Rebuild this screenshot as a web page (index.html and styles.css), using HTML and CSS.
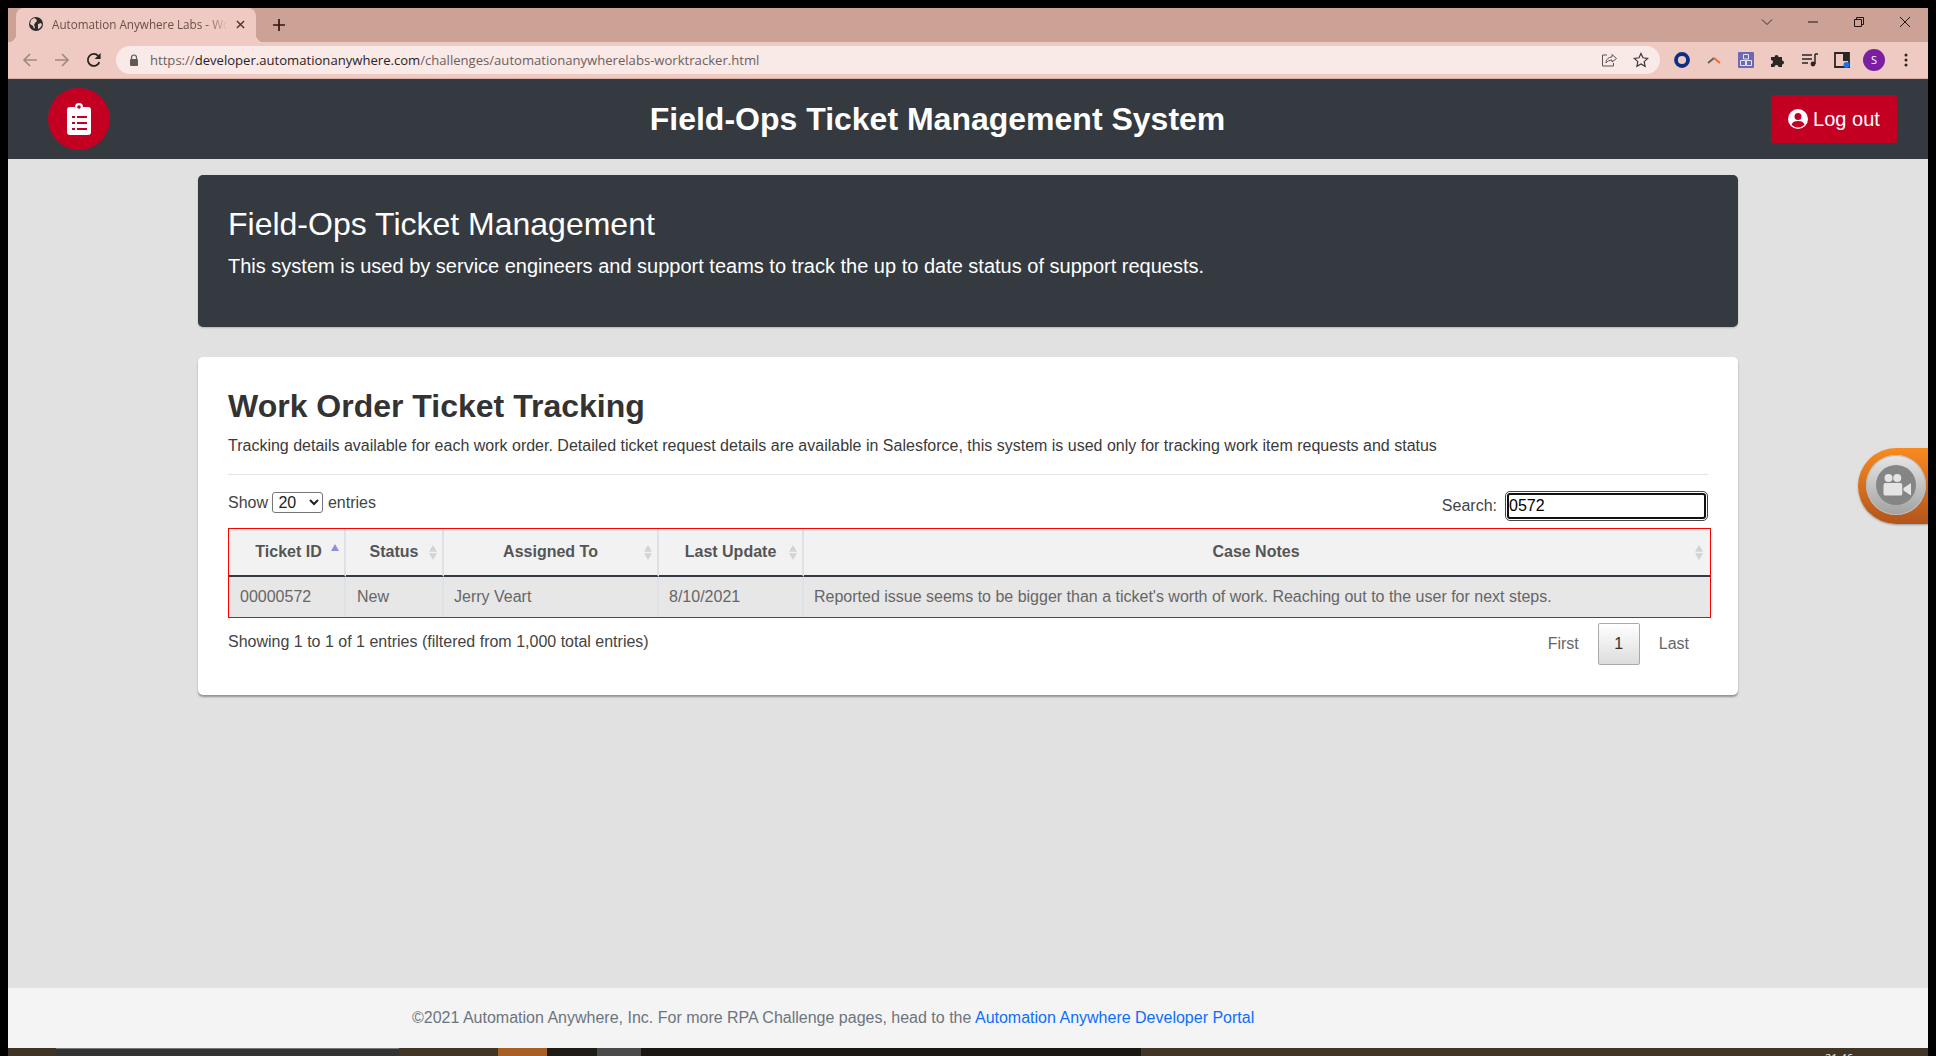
FILE: index.html
```html
<!DOCTYPE html>
<html lang="en">
<head>
<meta charset="utf-8">
<title>Automation Anywhere Labs - Work Tracker</title>
<link rel="stylesheet" href="styles.css">
</head>
<body>
<div class="window">
  <div class="tabstrip">
    <div class="tab">
      <svg class="favicon" viewBox="0 0 16 16"><circle cx="8" cy="8" r="7" fill="#2b2b2b"/><path d="M3 4l3-2 2 1 1 2-2 2-1 2 1 2-1 2-1-3-3-2zM10 8l3-1 1 2-2 3-2 1z" fill="#efcac2"/></svg>
      <span class="tab-title">Automation Anywhere Labs - Wo</span>
      <svg class="tab-close" viewBox="0 0 10 10"><path d="M1 1l8 8M9 1l-8 8" stroke="#4a3532" stroke-width="1.6"/></svg>
    </div>
    <svg class="newtab" viewBox="0 0 12 12"><path d="M6 0v12M0 6h12" stroke="#3d1210" stroke-width="1.7"/></svg>
    <div class="winctrls">
      <svg viewBox="0 0 12 12"><path d="M1 3.5l5 5 5-5" fill="none" stroke="#3c2c28"/></svg>
      <svg viewBox="0 0 12 12"><path d="M1 6h10" stroke="#201512" stroke-width="1"/></svg>
      <svg viewBox="0 0 12 12"><path d="M1.5 3.5h7v7h-7zM3.5 3.5v-2h7v7h-2" fill="none" stroke="#201512"/></svg>
      <svg viewBox="0 0 12 12"><path d="M1 1l10 10M11 1L1 11" stroke="#201512"/></svg>
    </div>
  </div>
  <div class="toolbar">
    <svg class="nav-ico" viewBox="0 0 16 16"><path d="M15 8H2M8 2L2 8l6 6" fill="none" stroke="#a08783" stroke-width="1.6"/></svg>
    <svg class="nav-ico" viewBox="0 0 16 16"><path d="M1 8h13M8 2l6 6-6 6" fill="none" stroke="#a08783" stroke-width="1.6"/></svg>
    <svg class="nav-ico" viewBox="0 0 16 16"><path d="M13.4 10.2A6 6 0 1 1 12.2 3.8" fill="none" stroke="#2b2322" stroke-width="1.8"/><path d="M14.6 1v6h-6z" fill="#2b2322"/></svg>
    <div class="omnibox">
      <svg class="lock" viewBox="0 0 10 12"><path d="M2.500 5V3.500a2.500 2.500 0 0 1 5 0V5" fill="none" stroke="#5f5a5a" stroke-width="1.200"/><rect x="1" y="5" width="8" height="7" rx="1" fill="#5f5a5a"/></svg>
      <span class="url"><span class="url-dim">https://</span><span class="url-host">developer.automationanywhere.com</span><span class="url-dim">/challenges/automationanywherelabs-worktracker.html</span></span>
      <svg class="omni-ico" viewBox="0 0 16 16"><path d="M6 3H1.500v11h11v-3" fill="none" stroke="#5f5350" stroke-width="1"/><path d="M5 11c0-4 3-6 6-6V2.500L15.500 6.500 11 10V8C8.500 8 6.500 9 5 11z" fill="none" stroke="#5f5350" stroke-width="1"/></svg>
      <svg class="omni-ico" viewBox="0 0 16 16"><path d="M8 1.500l2 4.300 4.700.6-3.500 3.200.9 4.700L8 12l-4.100 2.300.9-4.700L1.300 6.400 6 5.800z" fill="none" stroke="#3f3735" stroke-width="1.200"/></svg>
    </div>
    <div class="extensions">
      <svg viewBox="0 0 16 16"><circle cx="8" cy="8" r="6" fill="none" stroke="#0c2f86" stroke-width="3.800"/></svg>
      <svg viewBox="0 0 16 16"><path d="M2 11l6-5 " fill="none" stroke="#5c5c5c" stroke-width="1.800"/><path d="M8 6l6 5" fill="none" stroke="#ee6b2e" stroke-width="1.800"/></svg>
      <svg viewBox="0 0 16 16"><rect width="16" height="16" rx="1" fill="#6c69b4"/><path d="M5.500 2.500h5v4.500h-5zM2.500 8.500h5v5h-5zM8.500 8.500h5v5h-5z" fill="none" stroke="#e6e4f2"/></svg>
      <svg viewBox="0 0 16 16"><path d="M1 5h3.500a2 2 0 1 1 4 0H12v3.500a2 2 0 1 1 0 4V15H8.500a2 2 0 1 0-4 0H1v-3a2 2 0 1 0 0-4z" fill="#2b2523"/></svg>
      <svg viewBox="0 0 16 16"><path d="M0 3h10M0 7h10M0 11h6" stroke="#2b2523" stroke-width="1.400"/><path d="M13 2v10" stroke="#2b2523" stroke-width="1.500"/><path d="M13 2h3" stroke="#2b2523" stroke-width="1.500"/><circle cx="11" cy="12" r="2.400" fill="#2b2523"/></svg>
      <svg viewBox="0 0 16 16"><path d="M1 1h14v14H1z" fill="none" stroke="#2b2523" stroke-width="1.800"/><rect x="9" y="1" width="6" height="8" fill="#2b2523"/><circle cx="12.500" cy="13" r="3" fill="#1a73e8"/></svg>
      <span class="avatar">S</span>
      <svg class="kebab" viewBox="0 0 4 16"><circle cx="2" cy="3" r="1.500" fill="#2b2523"/><circle cx="2" cy="8" r="1.500" fill="#2b2523"/><circle cx="2" cy="13" r="1.500" fill="#2b2523"/></svg>
    </div>
  </div>

  <header class="navbar">
    <span class="logo">
      <svg viewBox="0 0 24 32"><path d="M3 4h5a4 4 0 0 1 8 0h5a3 3 0 0 1 3 3v22a3 3 0 0 1-3 3H3a3 3 0 0 1-3-3V7a3 3 0 0 1 3-3z" fill="#fff"/><circle cx="12" cy="4" r="1.800" fill="#c40022"/><g fill="#c40022"><rect x="5" y="13" width="3" height="2"/><rect x="5" y="19" width="3" height="2"/><rect x="5" y="25" width="3" height="2"/><rect x="10" y="13" width="10" height="2"/><rect x="10" y="19" width="10" height="2"/><rect x="10" y="25" width="10" height="2"/></g></svg>
    </span>
    <h1 class="nav-title">Field-Ops Ticket Management System</h1>
    <a class="logout">
      <svg viewBox="0 0 20 20"><circle cx="10" cy="10" r="10" fill="#fff"/><circle cx="10" cy="7.500" r="3.500" fill="#c40022"/><path d="M3.500 15.500c1-2.500 3-3.500 6.500-3.500s5.500 1 6.500 3.500c-1.500 2-3.800 3-6.500 3s-5-1-6.500-3z" fill="#c40022"/></svg>
      Log out
    </a>
  </header>

  <main class="page">
    <section class="jumbotron">
      <h2 class="jumbo-title">Field-Ops Ticket Management</h2>
      <p class="jumbo-text">This system is used by service engineers and support teams to track the up to date status of support requests.</p>
    </section>
    <section class="card">
      <h2 class="card-title">Work Order Ticket Tracking</h2>
      <p class="card-text">Tracking details available for each work order. Detailed ticket request details are available in Salesforce, this system is used only for tracking work item requests and status</p>
      <hr class="rule">
      <div class="controls">
        <label class="show">Show <select class="entries"><option>20</option></select> entries</label>
        <label class="search">Search: <input class="search-input" type="text" value="0572"></label>
      </div>
      <table class="tickets">
        <colgroup><col class="c1"><col class="c2"><col class="c3"><col class="c4"><col class="c5"></colgroup>
        <thead>
          <tr>
            <th class="asc">Ticket ID</th>
            <th>Status</th>
            <th>Assigned To</th>
            <th>Last Update</th>
            <th class="notes">Case Notes</th>
          </tr>
        </thead>
        <tbody>
          <tr>
            <td class="lead">00000572</td>
            <td class="lead">New</td>
            <td>Jerry Veart</td>
            <td>8/10/2021</td>
            <td>Reported issue seems to be bigger than a ticket's worth of work. Reaching out to the user for next steps.</td>
          </tr>
        </tbody>
      </table>
      <div class="table-foot">
        <span class="info">Showing 1 to 1 of 1 entries (filtered from 1,000 total entries)</span>
        <div class="pager"><a>First</a><a class="current">1</a><a>Last</a></div>
      </div>
    </section>
  </main>

  <footer class="footer">
    <span>©2021 Automation Anywhere, Inc. For more RPA Challenge pages, head to the <a class="portal">Automation Anywhere Developer Portal</a></span>
  </footer>

  <div class="cam-widget">
    <span class="cam-ring"><span class="cam-core">
      <svg viewBox="0 0 24 20"><circle cx="6" cy="4" r="3.200" fill="#e4e4e4"/><circle cx="13" cy="4" r="3.200" fill="#e4e4e4"/><rect x="2" y="8" width="15" height="10" rx="1.500" fill="#e4e4e4"/><path d="M18 12l6-4v10l-6-4z" fill="#e4e4e4"/></svg>
    </span></span>
  </div>
</div>
<div class="taskbar">
  <i class="s1"></i><i class="s2"></i><i class="s3"></i><i class="s4"></i><i class="s5"></i><i class="s6"></i><i class="s7"></i><i class="s8"><b class="clock">21:46</b></i>
</div>
</body>
</html>
```

FILE: styles.css
```css
* { box-sizing: border-box; }
html, body { height: 100%; }
body {
  margin: 0;
  padding: 8px 8px 0;
  background: #000;
  font-family: "Liberation Sans", Arial, sans-serif;
  color: #333;
  overflow: hidden;
  display: flex;
  flex-direction: column;
}
.window {
  position: relative;
  height: 1040px;
  flex: none;
  display: flex;
  flex-direction: column;
  background: #e1e1e1;
  overflow: hidden;
}

/* browser chrome */
.tabstrip {
  height: 34px;
  flex: none;
  background: #cba295;
  display: flex;
  align-items: flex-end;
  padding-left: 8px;
}
.tab {
  position: relative;
  width: 240px;
  height: 34px;
  background: #efcac2;
  border-radius: 8px 8px 0 0;
  display: flex;
  align-items: center;
  padding: 0 11px 2px 12px;
  gap: 8px;
}
.tab::before, .tab::after {
  content: "";
  position: absolute;
  bottom: 0;
  width: 8px;
  height: 8px;
}
.tab::before { left: -8px; background: radial-gradient(circle at 0 0, transparent 8px, #efcac2 8.5px); }
.tab::after { right: -8px; background: radial-gradient(circle at 100% 0, transparent 8px, #efcac2 8.5px); }
.favicon { width: 16px; height: 16px; flex: none; }
.tab-title {
  flex: 1;
  min-width: 0;
  white-space: nowrap;
  font: 11.7px "Open Sans", sans-serif;
  color: #6a4f4a;
  -webkit-mask-image: linear-gradient(90deg, #000 88%, transparent);
  mask-image: linear-gradient(90deg, #000 88%, transparent);
}
.tab-close { width: 9px; height: 9px; flex: none; }
.newtab { width: 12px; height: 12px; margin: 0 0 11px 17px; flex: none; }
.winctrls {
  margin-left: auto;
  align-self: flex-start;
  display: flex;
  gap: 34px;
  padding-right: 17px;
  height: 28px;
  align-items: center;
}
.winctrls svg { width: 12px; height: 12px; }
.toolbar {
  height: 37px;
  flex: none;
  background: #efcac2;
  border-bottom: 1px solid #d9b0a6;
  display: flex;
  align-items: center;
  padding: 0 0 1px 14px;
}
.nav-ico { width: 16px; height: 16px; margin-right: 16px; flex: none; }
.omnibox {
  width: 1544px;
  height: 28px;
  margin-left: -2px;
  background: #f9e9e7;
  border-radius: 14px;
  display: flex;
  align-items: center;
  padding: 0 11px 0 13px;
  flex: none;
}
.lock { width: 10px; height: 12px; flex: none; }
.url { flex: 1; margin-left: 11px; font: 13.1px "Open Sans", sans-serif; white-space: nowrap; }
.url-dim { color: #6d6060; }
.url-host { color: #2b2424; }
.omni-ico { width: 16px; height: 16px; margin-left: 16px; flex: none; }
.extensions {
  flex: 1;
  display: flex;
  align-items: center;
  gap: 16px;
  padding-left: 14px;
}
.extensions svg { width: 16px; height: 16px; flex: none; }
.extensions .kebab { width: 4px; }
.avatar {
  width: 22px;
  height: 22px;
  border-radius: 50%;
  background: #7b1fa2;
  color: #fff;
  font: 11px/22px "Open Sans", sans-serif;
  text-align: center;
  flex: none;
  margin: 0 3px 0 -3px;
}

/* site nav */
.navbar {
  height: 80px;
  flex: none;
  background: #343a40;
  display: flex;
  align-items: center;
  justify-content: space-between;
  padding: 0 31px 0 40px;
}
.logo {
  width: 62px;
  height: 62px;
  border-radius: 50%;
  background: #c40022;
  display: flex;
  align-items: center;
  justify-content: center;
  flex: none;
}
.logo svg { width: 24px; height: 32px; }
.nav-title {
  margin: 0 6px 0 0;
  color: #fff;
  font-size: 32px;
  font-weight: 700;
  line-height: 1.2;
}
.logout {
  width: 126px;
  height: 48px;
  border-radius: 3px;
  background: #c40022;
  color: #fff;
  font-size: 20px;
  display: flex;
  align-items: center;
  justify-content: center;
  gap: 5px;
}
.logout svg { width: 20px; height: 20px; }

/* page */
.page {
  flex: 1;
  width: 1540px;
  margin: 0 auto;
  padding-top: 16px;
}
.jumbotron {
  height: 152px;
  background: #343a40;
  border-radius: 5px;
  padding: 30px 30px 0;
  color: #fff;
  box-shadow: 0 1px 2px rgba(0,0,0,.2);
}
.jumbo-title { margin: 0; font-size: 32px; font-weight: 400; line-height: 38px; }
.jumbo-text { margin: 8px 0 0; font-size: 20px; line-height: 30px; }
.card {
  height: 338px;
  margin-top: 30px;
  background: #fff;
  border-radius: 5px;
  padding: 30px 30px 0;
  box-shadow: 0 2px 2px rgba(0,0,0,.35);
}
.card-title { margin: 0; font-size: 32px; font-weight: 700; line-height: 38px; color: #333; }
.card-text { margin: 9px 0 0; font-size: 16px; line-height: 24px; color: #3a3a3a; }
.rule { border: 0; border-top: 1px solid #e4e4e4; margin: 16px 0 0; }
.controls {
  display: flex;
  justify-content: space-between;
  align-items: flex-end;
  height: 44px;
  margin-bottom: 9px;
  font-size: 16px;
  color: #444;
}
.show { align-self: flex-start; margin-top: 17px; }
.entries {
  width: 51px;
  height: 21px;
  font: 16px "Liberation Sans", Arial, sans-serif;
  color: #222;
  background: #fff;
  border: 1px solid #767676;
  border-radius: 3px;
  padding: 0 0 0 1px;
}
.search { display: flex; align-items: center; gap: 10px; }
.search-input {
  width: 199px;
  height: 26px;
  font: 16px "Liberation Sans", Arial, sans-serif;
  color: #000;
  background: #fff;
  border: 2px solid #111;
  border-radius: 3px;
  padding: 0;
  outline: 1px solid #444;
  outline-offset: 1px;
  margin-right: 2px;
}
.tickets {
  width: 1483px;
  border-collapse: separate;
  border-spacing: 0;
  table-layout: fixed;
  border: 1px solid #ff0000;
  font-size: 16px;
}
.c1 { width: 117px; }
.c2 { width: 98px; }
.c3 { width: 215px; }
.c4 { width: 145px; }
.c5 { width: auto; }
.tickets th {
  position: relative;
  height: 48px;
  background: #f2f2f2;
  color: #555;
  font-weight: 700;
  text-align: center;
  padding: 0 18px;
  border-right: 2px solid #dee2e6;
  border-bottom: 2px solid #343a40;
}
.tickets th:last-child, .tickets td:last-child { border-right: 0; }
.tickets th::after {
  content: "";
  position: absolute;
  right: 5px;
  top: 16px;
  width: 8px;
  height: 15px;
  background: #d3d3d3;
  clip-path: polygon(50% 0, 100% 45%, 0 45%, 0 55%, 100% 55%, 50% 100%, 0 55%, 0 45%);
}
.tickets th.asc { padding: 0 16px 0 20px; }
.tickets th.notes { padding: 0 19px 0 17px; }
.tickets th.notes::after { right: 7px; }
.tickets th.asc::after {
  top: 15px;
  background: #8f8fd8;
  height: 7px;
  clip-path: polygon(50% 0, 100% 100%, 0 100%);
}
.tickets td {
  height: 40px;
  background: #e7e7e7;
  color: #666;
  padding: 0 10px;
  border-right: 2px solid #dee2e6;
  white-space: nowrap;
}
.tickets td.lead { padding-left: 11px; }
.table-foot {
  display: flex;
  justify-content: space-between;
  align-items: flex-start;
  font-size: 16px;
  margin-top: 5px;
  color: #444;
}
.info { margin-top: 10px; }
.pager {
  display: flex;
  align-items: center;
  color: #666;
}
.pager a { padding: 0 19px; line-height: 40px; }
.pager .current {
  width: 42px;
  height: 42px;
  padding: 0;
  text-align: center;
  color: #333;
  border: 1px solid #a9a9a9;
  border-radius: 2px;
  background: linear-gradient(#fff, #dcdcdc);
}

/* footer */
.footer {
  height: 60px;
  flex: none;
  background: #f4f4f4;
  color: #6c757d;
  font-size: 16px;
  padding-left: 404px;
  display: flex;
  align-items: center;
}
.portal { color: #0d6efd; }

/* recorder widget */
.cam-widget {
  position: absolute;
  right: 0;
  top: 440px;
  width: 70px;
  height: 76px;
  border-radius: 38px 0 0 38px;
  background: linear-gradient(#f98a1f, #b2551c);
  padding: 7px 0 0 8px;
  box-shadow: 0 1px 2px rgba(0,0,0,.3);
}
.cam-ring {
  width: 60px;
  height: 60px;
  border-radius: 50%;
  background: linear-gradient(#e6e6e6, #a2a2a2);
  box-shadow: inset 0 0 0 1px #bbb;
  display: flex;
  align-items: center;
  justify-content: center;
}
.cam-core {
  width: 40px;
  height: 40px;
  border-radius: 50%;
  background: #858585;
  display: flex;
  align-items: center;
  justify-content: center;
}
.cam-core svg { width: 30px; height: 25px; }

/* desktop strip below the window */
.taskbar {
  height: 8px;
  flex: none;
  display: flex;
  overflow: hidden;
}
.taskbar i { display: block; height: 8px; }
.s1 { width: 48px; background: #3f3324; }
.s2 { width: 343px; background: #333; border-top: 1px solid #777; }
.s3 { width: 99px; background: #413626; }
.s4 { width: 49px; background: #a85f25; }
.s5 { width: 50px; background: #1f1c18; }
.s6 { width: 44px; background: #4a4a4a; }
.s7 { width: 500px; background: #1b1612; }
.s8 { flex: 1; background: #413626; position: relative; }
.clock {
  position: absolute;
  right: 75px;
  top: 2px;
  font: 11px "Open Sans", sans-serif;
  color: #eee;
}
```
